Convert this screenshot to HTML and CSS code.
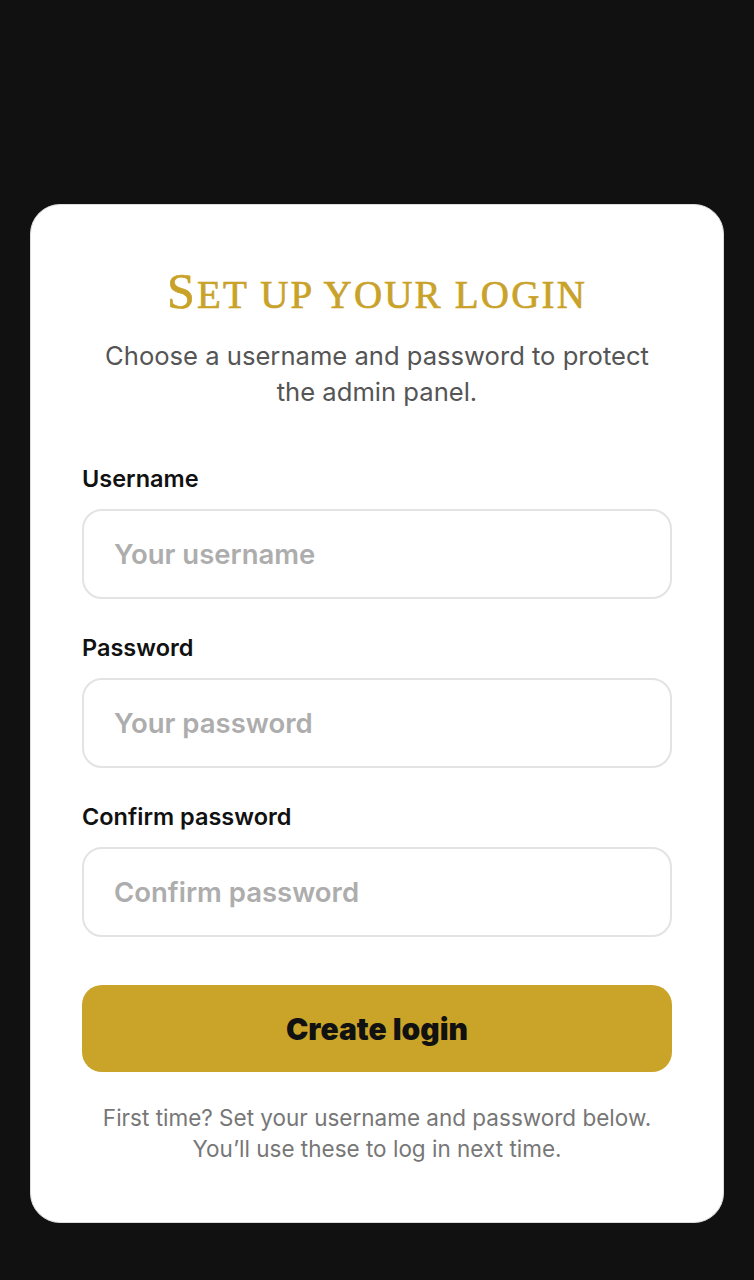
FILE: index.html
```html
<!DOCTYPE html>
<html lang="en">
<head>
    <meta charset="UTF-8">
    <meta name="viewport" content="width=device-width, initial-scale=1.0">
    <title>Set up your login</title>
    <link rel="stylesheet" href="styles.css">
</head>
<body>
    <div class="card">
        <h1>Set up your login</h1>
        <p class="intro">Choose a username and password to protect the admin panel.</p>

        <form class="setup-form" onsubmit="return false">
            <div class="field">
                <label for="username">Username</label>
                <input type="text" id="username" placeholder="Your username">
            </div>
            <div class="field">
                <label for="password">Password</label>
                <input type="password" id="password" placeholder="Your password">
            </div>
            <div class="field">
                <label for="confirm">Confirm password</label>
                <input type="password" id="confirm" placeholder="Confirm password">
            </div>
            <button type="submit">Create login</button>
        </form>

        <p class="note">First time? Set your username and password below.<br>You’ll use these to log in next time.</p>
    </div>
</body>
</html>
```

FILE: styles.css
```css
body {
    font-family: "Inter", "Noto Sans", Arial, sans-serif;
    background-color: #111111;
    margin: 0;
    padding: 204px 30px 60px;
}
.card {
    background-color: #fff;
    border: 1px solid #dcdcdc;
    border-radius: 30px;
    padding: 58px 51px 58px;
}
h1 {
    font-family: "Liberation Serif", "DejaVu Serif", serif;
    text-transform: uppercase;
    font-weight: normal;
    -webkit-text-stroke: 0.7px #c9a22a;
    color: #c9a22a;
    font-size: 39px;
    letter-spacing: 2.2px;
    line-height: 56px;
    text-align: center;
    margin: 0;
}
h1::first-letter {
    font-size: 50px;
}
.intro {
    color: #555;
    font-size: 25.6px;
    line-height: 36px;
    text-align: center;
    margin: 15px 14px 0;
}
.setup-form {
    margin-top: 55px;
}
.field {
    margin-bottom: 35px;
}
.field label {
    display: block;
    color: #111;
    font-size: 23.5px;
    font-weight: 600;
    line-height: 28px;
    margin-bottom: 16px;
}
.field input {
    display: block;
    box-sizing: border-box;
    width: 100%;
    height: 90px;
    border: 2px solid #e3e3e3;
    border-radius: 20px;
    padding: 0 30px;
    font-family: inherit;
    font-size: 27.5px;
    font-weight: 600;
    color: #222;
    background: #fff;
    outline: none;
}
.field input::placeholder {
    color: #adadad;
}
button {
    display: block;
    width: 100%;
    height: 87px;
    margin-top: 48px;
    border: none;
    border-radius: 20px;
    background-color: #c9a428;
    color: #111;
    font-family: inherit;
    font-size: 30px;
    font-weight: 900;
    cursor: pointer;
}
.note {
    color: #777;
    font-size: 22.5px;
    line-height: 31px;
    text-align: center;
    margin: 30px 0 0;
}
```
